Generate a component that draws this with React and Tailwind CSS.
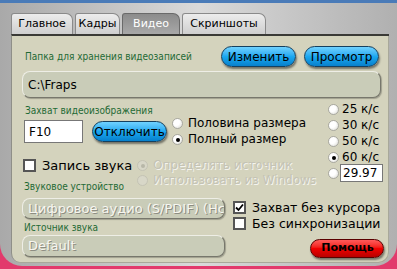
import React from "react"

const font = { fontFamily: "'DejaVu Sans', Verdana, sans-serif" }

const Radio = ({ checked, disabled }) => (
  <span
    className={`inline-flex h-[11px] w-[11px] shrink-0 items-center justify-center rounded-full border ${
      disabled ? "border-[#c4c3b4] bg-[#d8d7c8]" : "border-[#a8a8a0] bg-[radial-gradient(circle_at_35%_35%,#ffffff_40%,#d8d8d0)]"
    }`}
  >
    {checked && <span className={`h-[4px] w-[4px] rounded-full ${disabled ? "bg-[#b8b7a8]" : "bg-black"}`} />}
  </span>
)

const Check = ({ checked }) => (
  <span className="inline-flex h-[13px] w-[13px] shrink-0 items-center justify-center border-2 border-[#555] bg-white">
    {checked && (
      <svg width="9" height="9" viewBox="0 0 9 9">
        <path d="M1 4.5 L3.5 7 L8 1.5" stroke="#000" strokeWidth="1.8" fill="none" />
      </svg>
    )}
  </span>
)

const BlueButton = ({ children, className = "" }) => (
  <button
    className={`flex h-[21px] items-center justify-center rounded-full border border-[#15405f] bg-gradient-to-b from-[#6fd2ff] via-[#1aa8f0] to-[#0780cc] text-[12px] text-black shadow-[1px_2px_2px_rgba(0,0,0,0.45)] ${className}`}
  >
    {children}
  </button>
)

const Field = ({ children, className = "", muted }) => (
  <div
    className={`flex items-center rounded-[8px] border border-t-[#eeeee6] border-l-[#eeeee6] border-b-[#77776c] border-r-[#77776c] bg-[#c9ccb8] pl-[5px] shadow-[1px_1px_1px_rgba(0,0,0,0.25)] ${
      muted ? "text-[13px] text-[#f6f6f0] [text-shadow:1px_1px_0_#8d8d82]" : "text-[12px] text-black"
    } ${className}`}
  >
    {children}
  </div>
)

const Label = ({ children, className = "" }) => (
  <div
    className={`whitespace-nowrap text-[10px] leading-[12px] text-[#1f6a35] ${className}`}
    style={{ fontFamily: "'DejaVu Sans Condensed', 'DejaVu Sans', sans-serif" }}
  >
    {children}
  </div>
)

const tabs = [
  { name: "Главное", w: "w-[62px]" },
  { name: "Кадры", w: "w-[45px]" },
  { name: "Видео", w: "w-[58px]" },
  { name: "Скриншоты", w: "w-[84px]" },
]

export default function App() {
  return (
    <div className="h-[269px] w-[397px] overflow-hidden bg-[#e23a6c]" style={font}>
      <div className="flex h-[266px] flex-col rounded-b-[22px] border-t-[3px] border-[#4a7bb8] bg-gradient-to-r from-[#a9a9a9] via-[#dadada] to-[#b0b0b0] pl-[11px] pr-[8px] pt-[10px]">
        <div className="flex items-end gap-[2px]">
          {tabs.map((t) => (
            <div
              key={t.name}
              className={`flex h-[21px] items-center justify-center rounded-tr-[7px] rounded-tl-[3px] border border-b-0 text-[11px] ${t.w} ${
                t.name === "Видео"
                  ? "border-[#6a6a6a] bg-gradient-to-b from-[#8c8c8c] to-[#a8a8a8] text-white"
                  : "border-[#8a8a8a] bg-gradient-to-b from-[#ececec] to-[#cfcfcf] text-black"
              }`}
            >
              {t.name}
            </div>
          ))}
        </div>
        <div className="flex flex-1 flex-col rounded-b-[10px] border-t-2 border-l border-t-[#3a3a36] border-l-[#8f8f88] bg-[#d4d3bd] px-[10px] pb-[5px] pt-[10px] shadow-[inset_-1px_-1px_0_#a8a89a]">
          <div className="flex items-center justify-between">
            <Label className="ml-[3px]">Папка для хранения видеозаписей</Label>
            <div className="flex gap-[8px]">
              <BlueButton className="w-[75px]">Изменить</BlueButton>
              <BlueButton className="w-[75px]">Просмотр</BlueButton>
            </div>
          </div>
          <Field className="mt-[4px] h-[27px] w-[359px]">C:\Fraps</Field>

          <div className="mt-[5px] flex">
            <div className="flex-1">
              <Label className="ml-[3px] mt-[2px]">Захват видеоизображения</Label>
              <div className="flex items-center">
                <div className="ml-[2px] flex h-[23px] w-[59px] items-center border border-[#777] bg-white pl-[4px] text-[12px]">F10</div>
                <BlueButton className="ml-[9px] w-[75px]">Отключить</BlueButton>
                <div className="ml-[5px] flex flex-col gap-[3px] whitespace-nowrap text-[12px] leading-[13px]">
                  <div className="flex items-center gap-[5px]"><Radio />Половина размера</div>
                  <div className="flex items-center gap-[5px]"><Radio checked />Полный размер</div>
                </div>
              </div>
              <div className="mt-[12px] grid grid-cols-[115px_1fr] items-start whitespace-nowrap">
                <div className="flex items-center gap-[6px] pl-[1px] text-[13px] leading-[15px]"><Check />Запись звука</div>
                <div className="flex items-center gap-[5px] text-[12px] leading-[15px] text-[#c4c3b5] [text-shadow:1px_1px_0_#f4f4ee]"><Radio checked disabled />Определять источник</div>
                <Label className="ml-[2px] mt-[8px]">Звуковое устройство</Label>
                <div className="flex items-center gap-[5px] text-[12px] leading-[15px] text-[#c4c3b5] [text-shadow:1px_1px_0_#f4f4ee]"><Radio disabled />Использовать из Windows</div>
              </div>
            </div>
            <div className="mr-[-4px] flex w-[55px] flex-col gap-[3px] whitespace-nowrap text-[12px] leading-[13px]">
              {["25 к/с", "30 к/с", "50 к/с", "60 к/с"].map((f) => (
                <div key={f} className="flex items-center gap-[3px]"><Radio checked={f === "60 к/с"} />{f}</div>
              ))}
              <div className="mt-[-3px] flex items-center gap-[1px]">
                <Radio />
                <div className="flex h-[18px] w-[43px] items-center border border-[#777] bg-white pl-[2px]">29.97</div>
              </div>
            </div>
          </div>

          <div className="mt-[5px] flex">
            <div className="w-[203px] shrink-0">
              <Field muted className="h-[21px] overflow-hidden whitespace-nowrap">Цифровое аудио (S/PDIF) (Hc</Field>
              <Label className="ml-[2px] mt-[3px]">Источник звука</Label>
              <Field muted className="mt-[1px] h-[22px]">Default</Field>
            </div>
            <div className="ml-[8px] flex flex-1 flex-col whitespace-nowrap">
              <div className="mt-[2px] flex items-center gap-[6px] text-[12.5px] leading-[15px]"><Check checked />Захват без курсора</div>
              <div className="mt-[1px] flex items-center gap-[6px] text-[12.5px] leading-[15px]"><Check />Без синхронизации</div>
              <button className="mr-[-4px] mt-[8px] flex h-[19px] w-[74px] items-center justify-center self-end rounded-full border border-[#5a0000] bg-gradient-to-b from-[#ff5a5a] via-[#f00000] to-[#b80000] text-[11px] font-bold text-black shadow-[1px_2px_2px_rgba(0,0,0,0.45)]">
                Помощь
              </button>
            </div>
          </div>
        </div>
        <div className="h-[6px]" />
      </div>
    </div>
  )
}
